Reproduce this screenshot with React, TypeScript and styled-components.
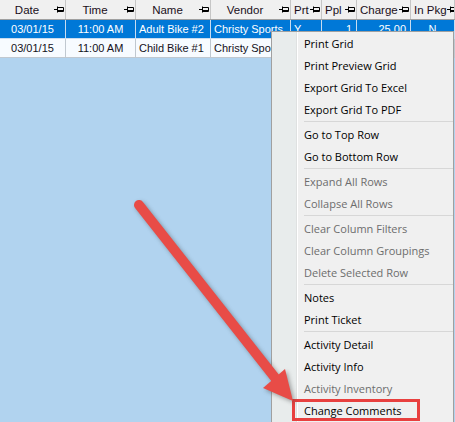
import * as React from 'react';
import styled, { createGlobalStyle, css } from 'styled-components';

const GlobalStyle = createGlobalStyle`
  html, body {
    margin: 0;
    padding: 0;
    background: #b1d3ef;
    overflow: hidden;
  }
  body {
    width: 455px;
    height: 422px;
    font-family: "Liberation Sans", Arial, sans-serif;
  }
`;

const Page = styled.div`
  position: relative;
  width: 455px;
  height: 422px;
  overflow: hidden;
  background: #b1d3ef;
`;

const COLS = '66px 70px 75px 80px 31px 35px 54px 44px';

const GridRow = styled.div<{ $variant: 'head' | 'selected' | 'normal' }>`
  display: grid;
  grid-template-columns: ${COLS};
  font-size: 11px;
  box-sizing: border-box;
  ${(p) =>
    p.$variant === 'head'
      ? css`
          height: 20px;
          background: #f0f0f0;
          color: #1a0f1a;
          font-size: 11.5px;
          border-bottom: 1px solid #a0a0a0;
        `
      : p.$variant === 'selected'
      ? css`
          height: 19px;
          background: #0078d7;
          color: #ffffff;
          border-bottom: 1px solid #c8dcf0;
        `
      : css`
          height: 19px;
          background: #f7fbff;
          color: #14101a;
          border-bottom: 1px solid #c0c8d0;
        `}
`;

const HeadCell = styled.div`
  display: flex;
  align-items: center;
  border-right: 1px solid #c6c6c6;
  padding-right: 1px;
  overflow: hidden;
  white-space: nowrap;
`;

const HeadLabel = styled.span<{ $align: 'center' | 'left' }>`
  flex: 1 0 auto;
  text-align: ${(p) => p.$align};
  padding-left: ${(p) => (p.$align === 'left' ? '3px' : '0')};
`;

const Cell = styled.div<{ $align: 'center' | 'left' | 'right'; $sel?: boolean }>`
  display: flex;
  align-items: center;
  justify-content: ${(p) =>
    p.$align === 'center' ? 'center' : p.$align === 'right' ? 'flex-end' : 'flex-start'};
  padding: ${(p) => (p.$align === 'right' ? '0 4px 0 0' : p.$align === 'left' ? '0 0 0 3px' : '0')};
  border-right: 1px solid ${(p) => (p.$sel ? '#c8dcf0' : '#c0c8d0')};
  white-space: nowrap;
  overflow: hidden;
`;

const Pin = () => (
  <svg width="10" height="7" viewBox="0 0 10 7" style={{ flex: 'none' }}>
    <path d="M0 3.5H3.5M3.5 0.5V6.5M3.5 1.5H9.5V5.5H3.5" stroke="#000" strokeWidth="1" fill="none" />
    <path d="M4 4.5H9.5" stroke="#000" strokeWidth="1" />
  </svg>
);

interface Column {
  title: string;
  head: 'center' | 'left';
  body: 'center' | 'left' | 'right';
}

const columns: Column[] = [
  { title: 'Date', head: 'center', body: 'center' },
  { title: 'Time', head: 'center', body: 'center' },
  { title: 'Name', head: 'center', body: 'left' },
  { title: 'Vendor', head: 'center', body: 'left' },
  { title: 'Prt', head: 'left', body: 'left' },
  { title: 'Ppl', head: 'left', body: 'right' },
  { title: 'Charge', head: 'left', body: 'right' },
  { title: 'In Pkg', head: 'left', body: 'center' },
];

const rows = [
  ['03/01/15', '11:00 AM', 'Adult Bike #2', 'Christy Sports', 'Y', '1', '25.00', 'N'],
  ['03/01/15', '11:00 AM', 'Child Bike #1', 'Christy Sports', 'Y', '1', '25.00', 'N'],
];

const Menu = styled.div`
  position: absolute;
  left: 271px;
  top: 31px;
  width: 183px;
  height: 400px;
  box-sizing: border-box;
  border: 1px solid #a0a0a0;
  border-bottom: none;
  background: #f0f0f0;
  font-family: "Segoe UI", "Open Sans", "Noto Sans", sans-serif;
  font-size: 11px;
  display: flex;
  flex-direction: column;
`;

const MenuItem = styled.div<{ $disabled?: boolean; $marked?: boolean }>`
  position: relative;
  display: flex;
  height: 22px;
  flex: none;
  color: ${(p) => (p.$disabled ? '#6d6d6d' : '#000')};
  ${(p) =>
    p.$marked &&
    css`
      &::after {
        content: '';
        position: absolute;
        left: 20px;
        top: 0;
        width: 128px;
        height: 22px;
        box-sizing: border-box;
        border: 3px solid #e8403f;
      }
    `}
`;

const Gutter = styled.div`
  width: 24px;
  flex: none;
  background: #e8ecec;
  border-right: 1px solid #dfe1e1;
  box-shadow: 1px 0 0 #ffffff;
`;

const ItemText = styled.div`
  flex: 1;
  display: flex;
  align-items: center;
  padding-left: 7px;
  white-space: nowrap;
`;

const Separator = styled.div`
  display: flex;
  height: 3px;
  flex: none;
`;

const SepLine = styled.div`
  flex: 1;
  margin: 1px 0 1px 7px;
  background: #d7d7d7;
`;

const Filler = styled.div`
  flex: 1;
  display: flex;
`;

const Arrow = styled.svg`
  position: absolute;
  left: 0;
  top: 0;
  pointer-events: none;
  filter: drop-shadow(2px 2px 2px rgba(60, 60, 60, 0.45));
`;

type Entry = { label: string; disabled?: boolean; marked?: boolean } | 'sep';

const menu: Entry[] = [
  { label: 'Print Grid' },
  { label: 'Print Preview Grid' },
  { label: 'Export Grid To Excel' },
  { label: 'Export Grid To PDF' },
  'sep',
  { label: 'Go to Top Row' },
  { label: 'Go to Bottom Row' },
  'sep',
  { label: 'Expand All Rows', disabled: true },
  { label: 'Collapse All Rows', disabled: true },
  'sep',
  { label: 'Clear Column Filters', disabled: true },
  { label: 'Clear Column Groupings', disabled: true },
  { label: 'Delete Selected Row', disabled: true },
  'sep',
  { label: 'Notes' },
  { label: 'Print Ticket' },
  'sep',
  { label: 'Activity Detail' },
  { label: 'Activity Info' },
  { label: 'Activity Inventory', disabled: true },
  { label: 'Change Comments', marked: true },
];

export default function App() {
  return (
    <Page>
      <GlobalStyle />
      <GridRow $variant="head">
        {columns.map((c) => (
          <HeadCell key={c.title}>
            <HeadLabel $align={c.head}>{c.title}</HeadLabel>
            <Pin />
          </HeadCell>
        ))}
      </GridRow>
      {rows.map((r, i) => (
        <GridRow key={i} $variant={i === 0 ? 'selected' : 'normal'}>
          {r.map((v, j) => (
            <Cell key={j} $align={columns[j].body} $sel={i === 0}>
              {v}
            </Cell>
          ))}
        </GridRow>
      ))}

      <Menu>
        {menu.map((m, i) =>
          m === 'sep' ? (
            <Separator key={i}>
              <Gutter />
              <SepLine />
            </Separator>
          ) : (
            <MenuItem key={i} $disabled={m.disabled} $marked={m.marked}>
              <Gutter />
              <ItemText>{m.label}</ItemText>
            </MenuItem>
          )
        )}
        <Filler>
          <Gutter />
        </Filler>
      </Menu>

      <Arrow width="455" height="422" viewBox="0 0 455 422">
        <line x1="139" y1="205" x2="276" y2="379" stroke="#e84c47" strokeWidth="10" strokeLinecap="round" />
        <polygon points="293,401 263,388 285,369" fill="#e84c47" />
      </Arrow>
    </Page>
  );
}
